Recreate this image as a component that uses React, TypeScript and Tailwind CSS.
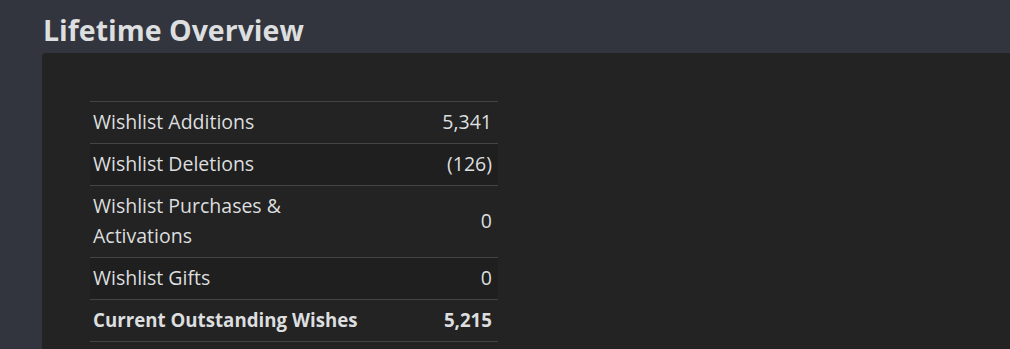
import React from 'react';

const rows = [
  { label: 'Wishlist Additions', value: '5,341' },
  { label: 'Wishlist Deletions', value: '(126)' },
  { label: 'Wishlist Purchases & Activations', value: '0' },
  { label: 'Wishlist Gifts', value: '0' },
  { label: 'Current Outstanding Wishes', value: '5,215', bold: true },
];

export default function App() {
  return (
    <div
      className="w-[1010px] h-[349px] overflow-hidden bg-[#32353d] pl-[42px] text-[#dcdedf]"
      style={{ fontFamily: '"Open Sans", "Noto Sans", sans-serif' }}
    >
      <h2 className="pt-[10px] pl-px text-[28.5px] font-bold leading-[40px] text-[#dcdedf]">
        Lifetime Overview
      </h2>
      <div className="mt-[3px] h-[400px] rounded-tl-[4px] bg-[#232323] pl-[48px] pt-[48px]">
        <table className="w-[408px] border-collapse text-[19.5px] leading-[30px]">
          <tbody>
            {rows.map((r, i) => (
              <tr
                key={r.label}
                className={`border-t border-b border-[#444] ${i % 2 === 1 ? 'bg-[#1f1f1f]' : ''} ${r.bold ? 'font-bold text-[18.7px]' : ''}`}
              >
                <td className={`w-[240px] pt-[5px] pb-[6px] pl-[3px] pr-2 align-middle ${r.bold ? 'whitespace-nowrap' : ''}`}>
                  {r.label}
                </td>
                <td className="pt-[5px] pb-[6px] pr-[6px] text-right align-middle">{r.value}</td>
              </tr>
            ))}
          </tbody>
        </table>
      </div>
    </div>
  );
}
